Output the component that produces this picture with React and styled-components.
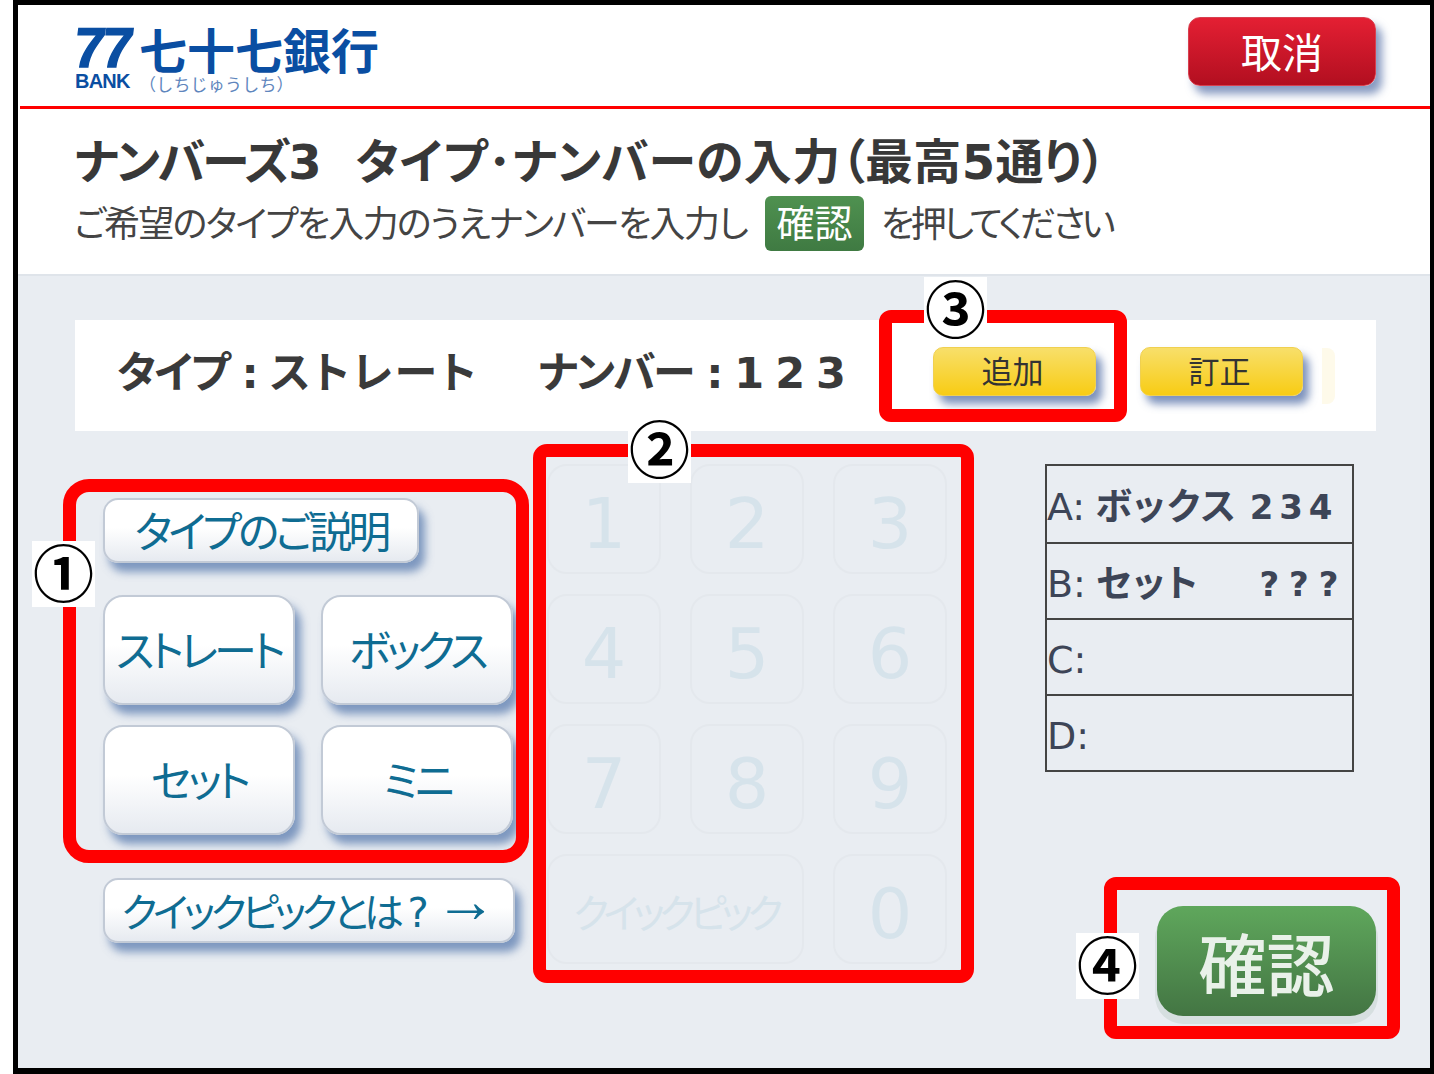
import React from "react";
import styled, { createGlobalStyle } from "styled-components";

const JP = `"DejaVu Sans", "Noto Sans CJK JP", sans-serif`;
const type = (weight, size, line = "1") => `
  font: ${weight} ${size}px/${line} ${JP};
  font-feature-settings: "palt";
`;

const Global = createGlobalStyle`
  html, body { margin: 0; padding: 0; background: #fff; }
  body { font-family: ${JP}; }
  * { box-sizing: border-box; }
`;

const Frame = styled.div`
  position: relative;
  width: 1421px;
  height: 1074px;
  margin-left: 13px;
  border: solid #000;
  border-width: 5px 4px 6px 5px;
  background: #fff;
  display: flex;
  flex-direction: column;
  overflow: hidden;
`;

const Header = styled.header`
  height: 104px;
  margin-left: 2px;
  padding: 12px 54px 0 55px;
  border-bottom: 3px solid #f00;
  display: flex;
  justify-content: space-between;
  align-items: flex-start;
`;

const Logo = styled.div`
  display: grid;
  grid-template-columns: 64px auto;
  align-items: start;
  margin-top: 9px;
  color: #0a4ea2;
`;
const LogoNum = styled.div`
  font: 700 56px/44px "Liberation Sans", sans-serif;
  letter-spacing: -3px;
  height: 44px;
  margin-left: -1px;
  transform: skewX(-7deg);
  -webkit-text-stroke: 1.5px #0a4ea2;
`;
const LogoName = styled.div`
  font: 700 48px/44px "Noto Sans CJK JP", sans-serif;
  height: 44px;
`;
const LogoBank = styled.div`
  font: 700 20px/22px "Liberation Sans", sans-serif;
  letter-spacing: -0.8px;
`;
const LogoKana = styled.div`
  font: 400 17px/20px "Noto Sans CJK JP", sans-serif;
  color: #5f86bd;
  letter-spacing: 0.2px;
  margin-top: 4px;
`;

const CancelButton = styled.button`
  width: 188px;
  height: 69px;
  padding: 5px 0 0;
  border: 1px solid #d8404f;
  border-radius: 12px;
  background: linear-gradient(#e41f33, #b20f20);
  color: #fff;
  ${type(400, 41)}
  box-shadow: 6px 8px 9px rgba(70, 100, 160, 0.65);
`;

const Intro = styled.section`
  height: 167px;
  padding: 21px 0 0 56px;
  border-bottom: 2px solid #dfe4ea;
`;
const Title = styled.h1`
  margin: 0;
  ${type(700, 48, "64px")}
  color: #383838;
  white-space: pre;
  display: flex;
  gap: 36px;
`;
const Spaced = styled.span`
  letter-spacing: ${(p) => p.$spacing}px;
`;
const Lead = styled.p`
  margin: 2px 0 0;
  ${type(400, 36, "56px")}
  letter-spacing: -1.7px;
  color: #444;
  display: flex;
  align-items: center;
  white-space: pre;
`;
const Badge = styled.span`
  width: 99px;
  height: 55px;
  margin: 0 17px 2px 18px;
  border-radius: 6px;
  background: linear-gradient(#4f9150, #3f7a42);
  color: #fff;
  ${type(400, 38, "57px")}
  letter-spacing: 0;
  text-align: center;
`;

const Main = styled.main`
  flex: 1;
  background: #e9edf2;
  padding: 44px 54px 0 57px;
`;

const EntryBar = styled.div`
  height: 111px;
  background: #fff;
  padding: 0 0 8px 42px;
  display: flex;
  align-items: center;
`;
const EntryText = styled.div`
  width: 816px;
  margin-top: 4px;
  ${type(700, 43)}
  color: #3a3a3a;
  white-space: pre;
  display: flex;
  gap: 59px;
`;
const YellowButton = styled.button`
  width: 163px;
  height: 49px;
  margin-right: 44px;
  padding: 2px 4px 0 0;
  border: 1px solid #f0d050;
  border-radius: 10px;
  background: linear-gradient(#f8df6a, #f8cc14);
  color: #333;
  ${type(400, 31)}
  box-shadow: 6px 8px 8px rgba(70, 100, 160, 0.7);
`;
const FadedButton = styled.div`
  width: 13px;
  height: 56px;
  margin: 8px 0 0 -25px;
  border-radius: 0 8px 8px 0;
  background: #fefaea;
`;

const Columns = styled.div`
  display: flex;
  margin-top: 33px;
`;

const LeftColumn = styled.div`
  width: 412px;
  margin-left: 28px;
  padding-top: 34px;
`;
const softButton = `
  border: 2px solid #c2cad6;
  background: linear-gradient(#fff 0%, #fff 45%, #e6eaf0 100%);
  color: #0f6c92;
  white-space: nowrap;
  padding: 5px 0 0;
  box-shadow: 6px 9px 8px rgba(80, 115, 170, 0.7);
`;
const HelpButton = styled.button`
  ${softButton}
  display: block;
  width: ${(p) => p.$width}px;
  height: 65px;
  border-radius: 15px;
  ${(p) => type(400, p.$size)}
  letter-spacing: ${(p) => p.$spacing}px;
`;
const Arrow = styled.span`
  margin-left: 2px;
  font: 400 62px/0 "Liberation Sans", sans-serif;
  letter-spacing: 0;
  vertical-align: 5px;
`;
const TypeGrid = styled.div`
  display: grid;
  grid-template-columns: 192px 192px;
  grid-auto-rows: 110px;
  column-gap: 26px;
  row-gap: 20px;
  margin: 32px 0 43px;
`;
const TypeButton = styled.button`
  ${softButton}
  border-radius: 20px;
  ${type(400, 43)}
  letter-spacing: -3.8px;
`;

const Keypad = styled.div`
  display: grid;
  grid-template-columns: repeat(3, 114px);
  grid-auto-rows: 110px;
  column-gap: 29px;
  row-gap: 20px;
  margin-left: 32px;
  width: 401px;
`;
const Key = styled.div`
  grid-column: span ${(p) => p.$span || 1};
  border: 2px solid #e4e8ed;
  border-radius: 20px;
  padding-top: 10px;
  display: flex;
  align-items: center;
  justify-content: center;
  color: #d6e3eb;
  white-space: nowrap;
  ${(p) => type(400, p.$size || 70)}
  letter-spacing: ${(p) => (p.$span ? -5.5 : 0)}px;
`;

const RightColumn = styled.div`
  width: 331px;
  margin-left: 97px;
  display: flex;
  flex-direction: column;
`;
const Picks = styled.div`
  width: 309px;
  border: 2px solid #444;
`;
const PickRow = styled.div`
  height: 76px;
  padding-top: 6px;
  display: flex;
  align-items: center;
  color: #3d4557;
  ${type(400, 38)}
  white-space: pre;
  & + & {
    border-top: 2px solid #444;
  }
`;
const PickName = styled.b`
  margin-left: 10px;
  ${type(700, 37)}
  letter-spacing: 2px;
`;
const PickDigits = styled.b`
  margin-left: ${(p) => p.$gap}px;
  ${type(700, 34)}
  letter-spacing: ${(p) => p.$spacing}px;
`;
const ConfirmButton = styled.button`
  align-self: flex-end;
  width: 219px;
  height: 110px;
  margin-top: 134px;
  padding: 14px 0 0;
  border: none;
  border-radius: 26px;
  background: linear-gradient(#5fa75c, #437543);
  color: #e9f1e9;
  ${type(500, 68)}
  box-shadow: 0 6px 0 2px #d6dfe0;
`;

/* red call-outs laid over the screen */
const CallOut = styled.div`
  position: absolute;
  left: ${(p) => p.$x - 18}px;
  top: ${(p) => p.$y - 5}px;
  width: ${(p) => p.$w}px;
  height: ${(p) => p.$h}px;
  border: 13px solid #f00;
  border-radius: ${(p) => p.$r}px;
`;
const Marker = styled.div`
  position: absolute;
  left: ${(p) => p.$x - 18}px;
  top: ${(p) => p.$y - 5}px;
  width: 63px;
  height: 66px;
  background: #fff;
  color: #000;
  font: 700 61px/60px "Noto Sans CJK JP", sans-serif;
  text-align: center;
`;

const KEYS = ["1", "2", "3", "4", "5", "6", "7", "8", "9"];

export default function App() {
  return (
    <Frame>
      <Global />
      <Header>
        <Logo>
          <LogoNum>77</LogoNum>
          <LogoName>七十七銀行</LogoName>
          <LogoBank>BANK</LogoBank>
          <LogoKana>（しちじゅうしち）</LogoKana>
        </Logo>
        <CancelButton>取消</CancelButton>
      </Header>
      <Intro>
        <Title>
          <Spaced $spacing={-2.4}>ナンバーズ3</Spaced>
          <Spaced $spacing={0.4}>タイプ･ナンバーの入力（最高5通り）</Spaced>
        </Title>
        <Lead>
          ご希望のタイプを入力のうえナンバーを入力し
          <Badge>確認</Badge>
          <Spaced $spacing={-3.3}>を押してください</Spaced>
        </Lead>
      </Intro>
      <Main>
        <EntryBar>
          <EntryText>
            <span>
              <Spaced $spacing={-2}>タイプ : </Spaced>
              <Spaced $spacing={3}>ストレート</Spaced>
            </span>
            <Spaced $spacing={-2}>ナンバー : 1 2 3</Spaced>
          </EntryText>
          <YellowButton>追加</YellowButton>
          <YellowButton>訂正</YellowButton>
          <FadedButton />
        </EntryBar>
        <Columns>
          <LeftColumn>
            <HelpButton $width={316} $size={43} $spacing={-4}>タイプのご説明</HelpButton>
            <TypeGrid>
              <TypeButton>ストレート</TypeButton>
              <TypeButton>ボックス</TypeButton>
              <TypeButton>セット</TypeButton>
              <TypeButton>ミニ</TypeButton>
            </TypeGrid>
            <HelpButton $width={412} $size={40} $spacing={-4.5}>
              クイックピックとは ? <Arrow>→</Arrow>
            </HelpButton>
          </LeftColumn>
          <Keypad>
            {KEYS.map((k) => (
              <Key key={k}>{k}</Key>
            ))}
            <Key $span={2} $size={40}>クイックピック</Key>
            <Key>0</Key>
          </Keypad>
          <RightColumn>
            <Picks>
              <PickRow>A:<PickName>ボックス</PickName><PickDigits $gap={12} $spacing={-3}>2 3 4</PickDigits></PickRow>
              <PickRow>B:<PickName>セット</PickName><PickDigits $gap={60} $spacing={-1}>? ? ?</PickDigits></PickRow>
              <PickRow>C:</PickRow>
              <PickRow>D:</PickRow>
            </Picks>
            <ConfirmButton>確認</ConfirmButton>
          </RightColumn>
        </Columns>
      </Main>
      <CallOut $x={63} $y={479} $w={466} $h={384} $r={26} />
      <CallOut $x={533} $y={444} $w={441} $h={539} $r={14} />
      <CallOut $x={879} $y={310} $w={248} $h={112} $r={12} />
      <CallOut $x={1104} $y={877} $w={296} $h={162} $r={12} />
      <Marker $x={32} $y={541}>①</Marker>
      <Marker $x={628} $y={417}>②</Marker>
      <Marker $x={924} $y={277}>③</Marker>
      <Marker $x={1076} $y={933}>④</Marker>
    </Frame>
  );
}
